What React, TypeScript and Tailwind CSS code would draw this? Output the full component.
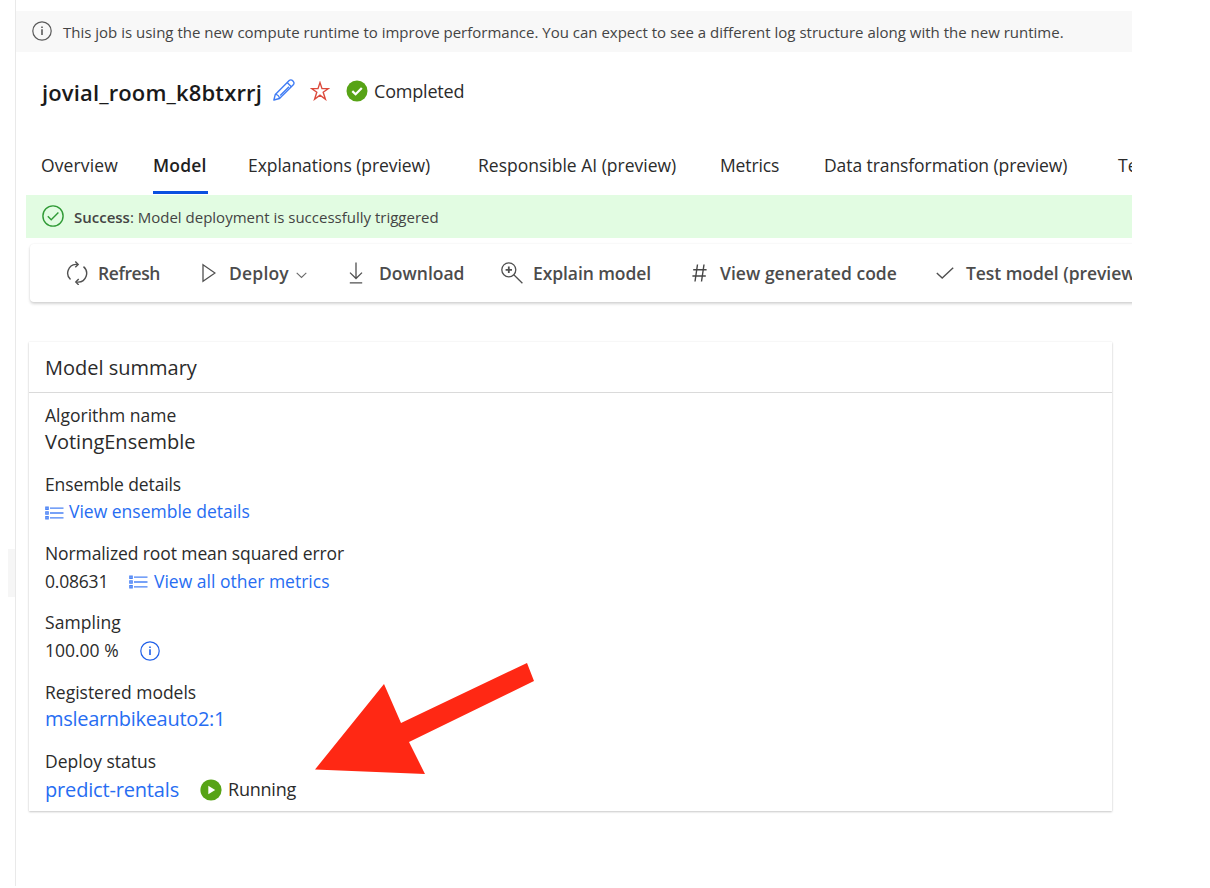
import type { ReactNode } from "react";

type IconProps = { className?: string };

function InfoIcon({ className }: IconProps) {
  return (
    <svg viewBox="0 0 20 20" fill="none" stroke="currentColor" className={className}>
      <circle cx="10" cy="10" r="9.2" strokeWidth="1.2" />
      <path d="M10 8.3V14" strokeWidth="1.6" />
      <path d="M10 5.4V7" strokeWidth="1.6" />
    </svg>
  );
}

function PencilIcon() {
  return (
    <svg viewBox="0 0 22 22" fill="none" stroke="#3f7cf4" strokeWidth="1.4" strokeLinejoin="round" className="h-[22px] w-[22px]">
      <path d="M0.9 21 2.3 15.4 16.2 1.6a2.3 2.3 0 0 1 3.3 0l0.8 0.8a2.3 2.3 0 0 1 0 3.3L6.5 19.5Z" />
      <path d="M14.2 3.6l4.1 4.1M2.3 15.4c2.4 0.3 3.8 1.7 4.2 4.1M16 7.8 7.2 16.6" />
    </svg>
  );
}

function StarIcon() {
  return (
    <svg viewBox="0 0 20 20" fill="none" stroke="#dc4a3c" strokeWidth="1.4" className="h-5 w-5">
      <path d="M10 1.6 12 7.6H18.4L13.2 11.3 15.4 18.2 10 14.1 4.6 18.2 6.8 11.3 1.6 7.6H8Z" />
    </svg>
  );
}

function CompletedIcon() {
  return (
    <svg viewBox="0 0 22 22" className="h-[22px] w-[22px]">
      <circle cx="11" cy="11" r="10.5" fill="#57a316" />
      <path d="M6.3 11.1 9.6 14.3 15.8 8" fill="none" stroke="#fff" strokeWidth="2.2" />
    </svg>
  );
}

function RunningIcon() {
  return (
    <svg viewBox="0 0 22 22" className="mt-px h-[22px] w-[22px]">
      <circle cx="11" cy="11" r="10.6" fill="#57a316" />
      <path d="M8.3 6.8 15.2 11 8.3 15.2Z" fill="#fff" />
    </svg>
  );
}

function SuccessIcon() {
  return (
    <svg viewBox="0 0 22 22" fill="none" stroke="#2f9a35" className="-mt-px h-[22px] w-[22px]">
      <circle cx="11" cy="11" r="10.1" strokeWidth="1.4" />
      <path d="M5.8 11.3 9.2 14.7 16.4 7.5" strokeWidth="1.4" />
    </svg>
  );
}

function RefreshIcon() {
  return (
    <svg viewBox="0 0 22 24" fill="none" stroke="#505050" strokeWidth="1.4" className="h-6 w-[22px]">
      <path d="M11.6 3.4H9.8A8.8 8.8 0 0 0 4.5 18.6" />
      <path d="M10.4 21.1h1.8A8.8 8.8 0 0 0 17.5 5.6" />
      <path d="M9.3 0.5 12.2 3.4 9.3 6.3M12.7 18 9.8 21 12.7 23.9" />
    </svg>
  );
}

function PlayIcon() {
  return (
    <svg viewBox="0 0 14 20" fill="none" stroke="#505050" strokeWidth="1.3" className="h-5 w-[14px]">
      <path d="M1 1.8 13 10 1 18.2Z" />
    </svg>
  );
}

function ChevronIcon() {
  return (
    <svg viewBox="0 0 11 7" fill="none" stroke="#6a6a6a" strokeWidth="1.1" className="h-[7px] w-[11px]">
      <path d="M0.7 0.9 5.5 5.5 10.3 0.9" />
    </svg>
  );
}

function DownloadIcon() {
  return (
    <svg viewBox="0 0 14 22" fill="none" stroke="#505050" strokeWidth="1.3" className="h-[22px] w-[14px]">
      <path d="M7 0.5V16.3M1 10.6 7 16.5 13 10.6M0.8 20.8H13.2" />
    </svg>
  );
}

function ExplainIcon() {
  return (
    <svg viewBox="0 0 22 22" fill="none" stroke="#505050" strokeWidth="1.3" className="h-[22px] w-[22px]">
      <circle cx="7.8" cy="7.8" r="7" />
      <path d="M12.8 12.8 21.4 21.2" />
      <path d="M7.8 4.6V11M4.6 7.8H11" strokeWidth="1.8" />
    </svg>
  );
}

function HashIcon() {
  return (
    <svg viewBox="0 0 15 18" fill="none" stroke="#454545" strokeWidth="1.4" className="-mt-px h-[18px] w-[15px]">
      <path d="M5.5 0.5 3 17.5M12 0.5 9.5 17.5M1.2 5.8H14.6M0.4 12H13.8" />
    </svg>
  );
}

function CheckIcon() {
  return (
    <svg viewBox="0 0 18 12" fill="none" stroke="#505050" strokeWidth="1.4" className="h-3 w-[18px]">
      <path d="M0.8 6 6.2 11 17.2 0.7" />
    </svg>
  );
}

function ListIcon() {
  return (
    <svg viewBox="0 0 19 14" fill="none" stroke="#4a82f5" className="mt-px h-[14px] w-[19px] shrink-0">
      <path d="M5 2.2H18.5M5 7H18.5M5 11.8H18.5" strokeWidth="1.3" />
      <path d="M0.9 1.1h2.2v2.2H0.9zM0.9 5.9h2.2v2.2H0.9zM0.9 10.7h2.2v2.2H0.9z" strokeWidth="1.4" />
    </svg>
  );
}

function Tab({ className, children }: { className: string; children: ReactNode }) {
  return <button className={`h-full shrink-0 text-left whitespace-nowrap ${className}`}>{children}</button>;
}

function Command({ icon, iconBox, width, children }: { icon: ReactNode; iconBox: string; width: string; children: ReactNode }) {
  return (
    <button className={`flex shrink-0 items-center whitespace-nowrap ${width}`}>
      <span className={`flex shrink-0 items-center ${iconBox}`}>{icon}</span>
      {children}
    </button>
  );
}

function Field({ label, className = "", children }: { label: string; className?: string; children: ReactNode }) {
  return (
    <div className="h-[69.3px] whitespace-nowrap leading-[27.5px]">
      <div className={className}>{label}</div>
      <div className="flex h-[27.5px] items-center">{children}</div>
    </div>
  );
}

export default function App() {
  return (
    <div className="flex h-[888px] w-[1210px] overflow-hidden bg-white font-['Open_Sans',sans-serif] text-[17.5px] text-[#2b2b2b]">
      <aside className="flex h-[886px] w-4 shrink-0 justify-end border-r border-[#e9e9e9] pt-[549px]">
        <div className="h-12 w-[7px] bg-[#f6f6f6]" />
      </aside>
      <main className="w-[1116px] shrink-0 overflow-hidden">
        <div className="mt-[11px] flex h-[41px] items-center bg-[#f8f8f8] pl-4 text-[15px] text-[#444]">
          <InfoIcon className="-mt-px mr-[11px] h-5 w-5 shrink-0 text-[#5a5a5a]" />
          <span className="mt-px whitespace-nowrap">
            This job is using the new compute runtime to improve performance. You can expect to see a different log structure along with the new runtime.
          </span>
        </div>

        <header className="flex h-[78px] items-center pl-[26px]">
          <h1 className="mt-[3px] w-[231px] text-[22px] font-semibold tracking-[0.14px] text-[#1a1a1a]">jovial_room_k8btxrrj</h1>
          <div className="mr-[15px] -mt-[2px]"><PencilIcon /></div>
          <div className="mr-[16px]"><StarIcon /></div>
          <CompletedIcon />
          <span className="ml-[6px] mt-px text-[18px] tracking-[-0.2px]">Completed</span>
        </header>

        <nav className="flex h-[65px] pl-[25px] pt-[6px] leading-[57px]">
          <Tab className="w-[112px] tracking-[0.12px]">Overview</Tab>
          <Tab className="w-[95px] font-semibold tracking-[0.2px] text-[#1f1f1f]">
            <span className="flex h-[57px] w-[55px] border-b-[3px] border-[#0b50e0]">Model</span>
          </Tab>
          <Tab className="w-[230px] tracking-[-0.06px]">Explanations (preview)</Tab>
          <Tab className="w-[242px]">Responsible AI (preview)</Tab>
          <Tab className="w-[104px] tracking-[-0.14px]">Metrics</Tab>
          <Tab className="w-[294px] tracking-[-0.08px]">Data transformation (preview)</Tab>
          <Tab className="">Test results</Tab>
        </nav>

        <div className="ml-[10px] flex h-[43px] items-center bg-[#e2fce2] pl-4 text-[15px] text-[#444]">
          <SuccessIcon />
          <span className="ml-[10px] mt-px whitespace-nowrap">
            <span className="font-semibold">Success</span>: Model deployment is successfully triggered
          </span>
        </div>

        <div className="ml-[14px] mt-[6px] flex h-[58px] w-[1130px] items-center rounded pl-[36px] font-semibold text-[#4c4c4c] shadow-[0_2px_3px_rgba(0,0,0,0.16),0_0_2px_rgba(0,0,0,0.08)]">
          <Command icon={<RefreshIcon />} iconBox="w-[32px]" width="w-[136px] tracking-[-0.4px]">Refresh</Command>
          <Command icon={<PlayIcon />} iconBox="w-[27px]" width="w-[147px] tracking-[0.2px]">
            Deploy
            <span className="ml-[7px] mt-1"><ChevronIcon /></span>
          </Command>
          <Command icon={<DownloadIcon />} iconBox="w-[30px]" width="w-[152px]">Download</Command>
          <Command icon={<ExplainIcon />} iconBox="w-[32px]" width="w-[191px] tracking-[-0.08px]">Explain model</Command>
          <Command icon={<HashIcon />} iconBox="w-[28px]" width="w-[244px] tracking-[0.04px]">View generated code</Command>
          <Command icon={<CheckIcon />} iconBox="w-[30px]" width="tracking-[-0.05px]">Test model (preview)</Command>
        </div>

        <section className="relative ml-[13px] mt-[40px] h-[469px] w-[1083px] shadow-[0_1px_2px_rgba(0,0,0,0.2),0_0_2px_rgba(0,0,0,0.07)]">
          <h2 className="flex h-[51px] items-center border-b border-[#dadada] pl-4 pt-[2px] text-[20px]">Model summary</h2>
          <div className="pl-4 pt-[8.6px]">
            <Field label="Algorithm name">
              <span className="-mt-[3px] text-[20px]">VotingEnsemble</span>
            </Field>
            <Field label="Ensemble details" className="tracking-[-0.12px]">
              <a className="flex items-center gap-[5px] text-[#276df2]"><ListIcon />View ensemble details</a>
            </Field>
            <Field label="Normalized root mean squared error" className="tracking-[-0.1px]">
              <span className="w-[84px] tracking-[-0.2px]">0.08631</span>
              <a className="flex items-center gap-[6px] text-[#276df2]"><ListIcon />View all other metrics</a>
            </Field>
            <Field label="Sampling" className="tracking-[0.08px]">
              <span className="w-[95px]">100.00 %</span>
              <InfoIcon className="h-5 w-5 text-[#1f5fe8]" />
            </Field>
            <Field label="Registered models">
              <a className="-mt-[3px] text-[20px] tracking-[-0.3px] text-[#276df2]">mslearnbikeauto2:1</a>
            </Field>
            <Field label="Deploy status">
              <a className="w-[155px] text-[20px] tracking-[-0.17px] text-[#276df2]">predict-rentals</a>
              <RunningIcon />
              <span className="ml-[6px] mt-px text-[18px] tracking-[-0.22px]">Running</span>
            </Field>
          </div>
          <svg viewBox="0 0 220 112" className="absolute left-[286px] top-[321px] h-[112px] w-[220px]">
            <path d="M0 106.5 69 21 86 60 212 0 219 18 94 79 110 111Z" fill="#ff2814" />
          </svg>
        </section>
      </main>
    </div>
  );
}
